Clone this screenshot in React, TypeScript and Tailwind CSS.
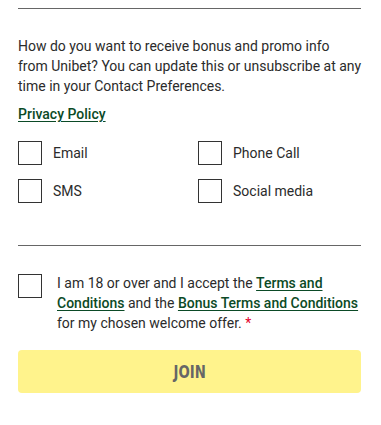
const OPTIONS = ["Email", "Phone Call", "SMS", "Social media"];

function Box() {
  return <span className="block h-6 w-6 shrink-0 border border-[#333] bg-white" />;
}

export default function App() {
  return (
    <div
      className="w-[381px] bg-white px-[18px] pt-2 text-[14px] leading-5 text-[#2b2b2b]"
      style={{ fontFamily: "Roboto, 'Liberation Sans', sans-serif" }}
    >
      <div className="h-px w-[343px] bg-[#666]" />

      <p className="mt-[27px]">
        How do you want to receive bonus and promo info
        <br />
        from Unibet? You can update this or unsubscribe at any time in your Contact Preferences.
      </p>
      <a href="#" className="mt-2 block w-max font-medium text-[#0b4a26] underline underline-offset-2">
        Privacy Policy
      </a>

      <div className="mt-[17px] grid grid-cols-[180px_1fr] gap-y-[14px]">
        {OPTIONS.map((o) => (
          <label key={o} className="flex items-center gap-[11px]">
            <Box />
            <span>{o}</span>
          </label>
        ))}
      </div>

      <div className="mt-[42px] h-px w-[343px] bg-[#666]" />

      <div className="mt-7 flex gap-[15px]">
        <Box />
        <p className="-mt-px">
          I am 18 or over and I accept the{" "}
          <a href="#" className="font-medium text-[#0b4a26] underline underline-offset-2">
            Terms and Conditions
          </a>{" "}
          and the{" "}
          <a href="#" className="font-medium text-[#0b4a26] underline underline-offset-2">
            Bonus Terms and Conditions
          </a>{" "}
          for my chosen welcome offer. <span className="text-[#e4002b]">*</span>
        </p>
      </div>

      <button
        type="button"
        className="mt-[17px] flex h-[43px] w-[343px] items-center justify-center rounded bg-[#fff38c] text-[#666]"
      >
        <span
          className="inline-block scale-x-[0.78] text-[17px] font-bold"
          style={{ fontFamily: "'DejaVu Sans', sans-serif" }}
        >
          JOIN
        </span>
      </button>
      <div className="h-8" />
    </div>
  );
}
